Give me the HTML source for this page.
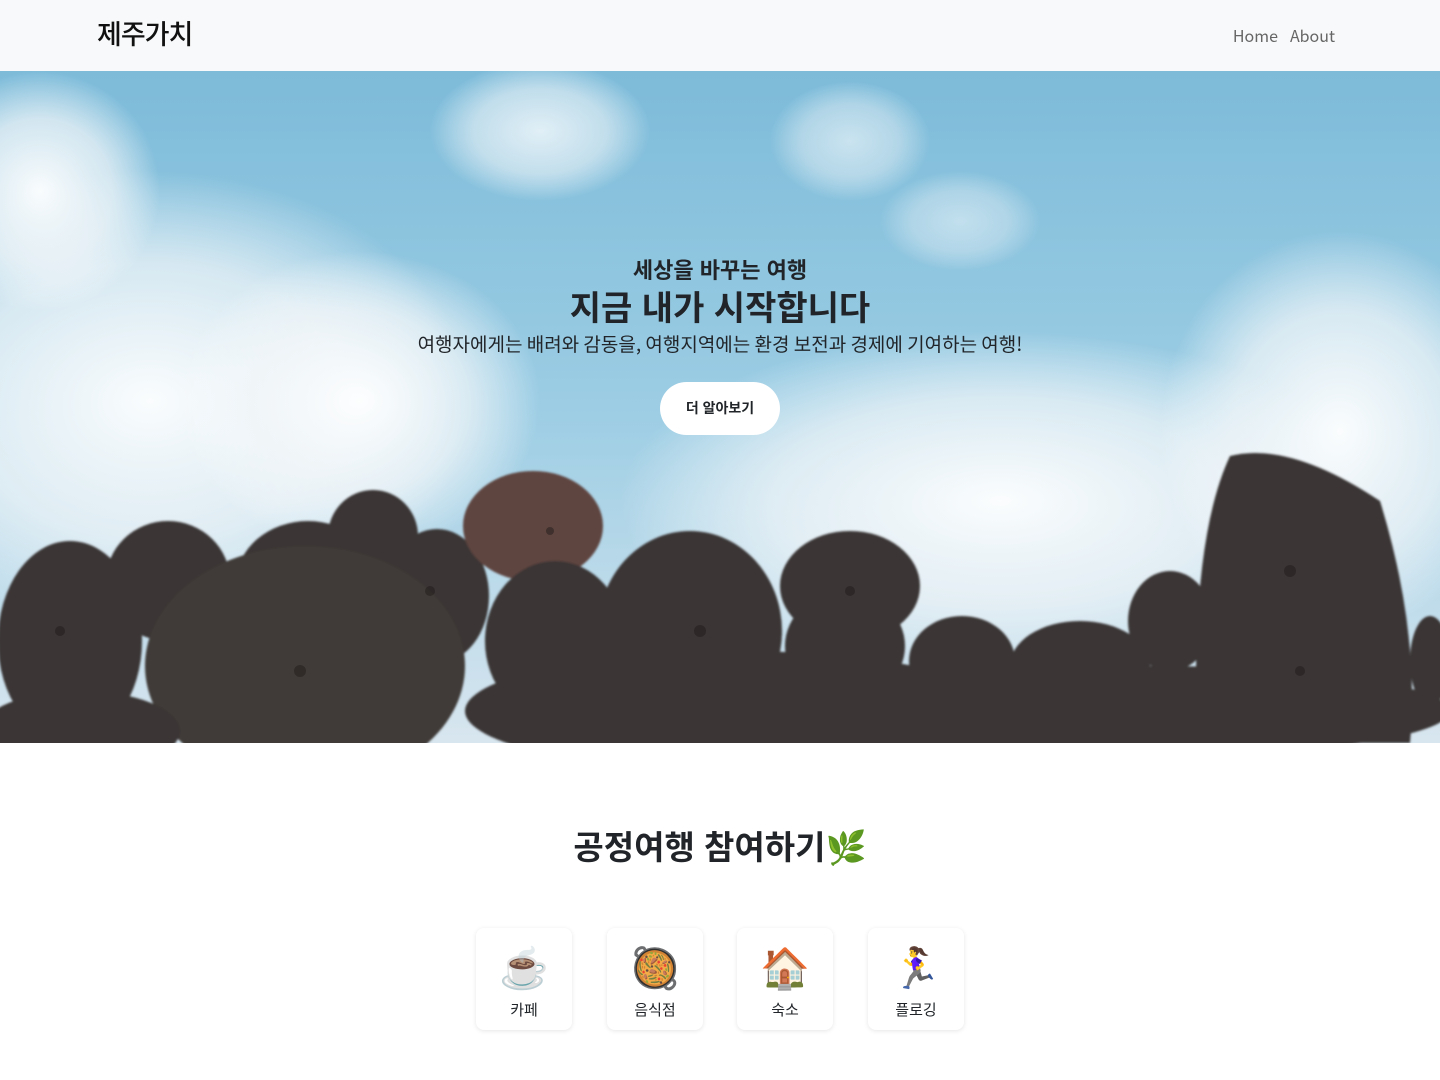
<!DOCTYPE html>
<html><head><meta charset="utf-8"><style>
*{margin:0;padding:0;box-sizing:border-box}
body{width:1440px;height:1080px;overflow:hidden;background:#fff;font-family:"Liberation Sans","Noto Sans CJK KR",sans-serif;color:#212529}
nav{height:71px;background:#f8f9fa;position:relative}
.logo{position:absolute;left:97px;top:13px;font-size:27px;font-family:"Noto Sans CJK KR",sans-serif;font-weight:500;color:#111;letter-spacing:-1px}
.links{position:absolute;right:105px;top:23px;font-size:16px;color:#666;font-family:"Noto Sans CJK KR",sans-serif}
.links span{margin-left:12px}
.hero{position:absolute;top:71px;left:0;width:1440px;height:672px;overflow:hidden}
.txt{position:absolute;left:0;width:100%;text-align:center}
h3.txt{top:182px;font-size:22px;font-weight:700;color:#212529}
h1.txt{top:210px;font-size:34px;font-weight:700;color:#212529}
p.sub{top:259px;font-size:19px;color:#212529;font-family:"Noto Sans CJK KR",sans-serif}
.btn{position:absolute;left:660px;top:311px;width:120px;height:53px;border-radius:27px;background:#fff;font-size:14px;font-weight:700;line-height:53px;text-align:center;color:#212529}
h2{position:absolute;top:821px;width:100%;text-align:center;font-size:33px;font-weight:700;color:#212529}
.card{position:absolute;top:928px;width:96px;height:102px;background:#fff;border-radius:8px;box-shadow:0 1px 5px rgba(0,0,0,.1);text-align:center}
.card .e{font-size:40px;line-height:48px;margin-top:17px;height:48px}
.card .l{font-size:15px;margin-top:6px}
</style></head><body>
<nav><div class="logo">제주가치</div><div class="links"><span>Home</span><span>About</span></div></nav>
<div class="hero">
<svg width="1440" height="672" viewBox="0 0 1440 672">
<defs>
<linearGradient id="sky" x1="0" y1="0" x2="0" y2="1"><stop offset="0" stop-color="#7dbbd9"/><stop offset=".5" stop-color="#9ccde4"/><stop offset="1" stop-color="#d8e6ef"/></linearGradient>
<radialGradient id="cl"><stop offset="0" stop-color="#fff" stop-opacity=".95"/><stop offset=".6" stop-color="#f4f7f9" stop-opacity=".7"/><stop offset="1" stop-color="#fff" stop-opacity="0"/></radialGradient>
<filter id="b"><feGaussianBlur stdDeviation="1"/></filter>
</defs>
<rect width="1440" height="672" fill="url(#sky)"/>
<ellipse cx="150" cy="330" rx="320" ry="230" fill="url(#cl)"/>
<ellipse cx="40" cy="120" rx="120" ry="120" fill="url(#cl)"/>
<ellipse cx="360" cy="330" rx="180" ry="150" fill="url(#cl)"/>
<ellipse cx="1000" cy="430" rx="380" ry="170" fill="url(#cl)"/>
<ellipse cx="1340" cy="360" rx="180" ry="200" fill="url(#cl)"/>
<ellipse cx="540" cy="60" rx="110" ry="70" fill="url(#cl)" opacity=".8"/>
<ellipse cx="850" cy="70" rx="80" ry="60" fill="url(#cl)" opacity=".6"/>
<ellipse cx="960" cy="150" rx="80" ry="50" fill="url(#cl)" opacity=".5"/>
<g fill="#3b3634" filter="url(#b)">
<ellipse cx="70" cy="570" rx="72" ry="100"/>
<ellipse cx="168" cy="510" rx="62" ry="60"/>
<ellipse cx="308" cy="512" rx="72" ry="62"/>
<ellipse cx="373" cy="465" rx="45" ry="46"/>
<ellipse cx="437" cy="525" rx="52" ry="67"/>
<ellipse cx="533" cy="455" rx="70" ry="55" fill="#5e4540"/>
<ellipse cx="555" cy="570" rx="70" ry="80"/>
<ellipse cx="690" cy="560" rx="92" ry="100"/>
<ellipse cx="850" cy="515" rx="70" ry="55"/>
<ellipse cx="845" cy="575" rx="60" ry="55"/>
<ellipse cx="305" cy="595" rx="160" ry="120" fill="#403a37"/>
<ellipse cx="735" cy="640" rx="270" ry="60"/>
<ellipse cx="962" cy="590" rx="53" ry="45"/>
<ellipse cx="1080" cy="595" rx="70" ry="45"/>
<ellipse cx="1170" cy="550" rx="42" ry="50"/>
<path d="M1230 385 Q1290 370 1380 430 Q1420 560 1410 672 L1197 672 Q1190 470 1230 385Z"/>
<ellipse cx="1430" cy="590" rx="20" ry="45"/>
<ellipse cx="1150" cy="640" rx="300" ry="45"/>
<ellipse cx="80" cy="660" rx="100" ry="40"/>
</g>
<g fill="#1f1b1a" opacity=".5">
<circle cx="60" cy="560" r="5"/><circle cx="300" cy="600" r="6"/><circle cx="700" cy="560" r="6"/><circle cx="1290" cy="500" r="6"/><circle cx="850" cy="520" r="5"/><circle cx="550" cy="460" r="4"/><circle cx="1300" cy="600" r="5"/><circle cx="430" cy="520" r="5"/>
</g>
</svg>
<h3 class="txt">세상을 바꾸는 여행</h3>
<h1 class="txt">지금 내가 시작합니다</h1>
<p class="sub txt">여행자에게는 배려와 감동을, 여행지역에는 환경 보전과 경제에 기여하는 여행!</p>
<div class="btn">더 알아보기</div>
</div>
<h2>공정여행 참여하기🌿</h2>
<div class="card" style="left:476px"><div class="e">☕</div><div class="l">카페</div></div>
<div class="card" style="left:607px"><div class="e">🥘</div><div class="l">음식점</div></div>
<div class="card" style="left:737px"><div class="e">🏠</div><div class="l">숙소</div></div>
<div class="card" style="left:868px"><div class="e">🏃‍♀️</div><div class="l">플로깅</div></div>
</body></html>
